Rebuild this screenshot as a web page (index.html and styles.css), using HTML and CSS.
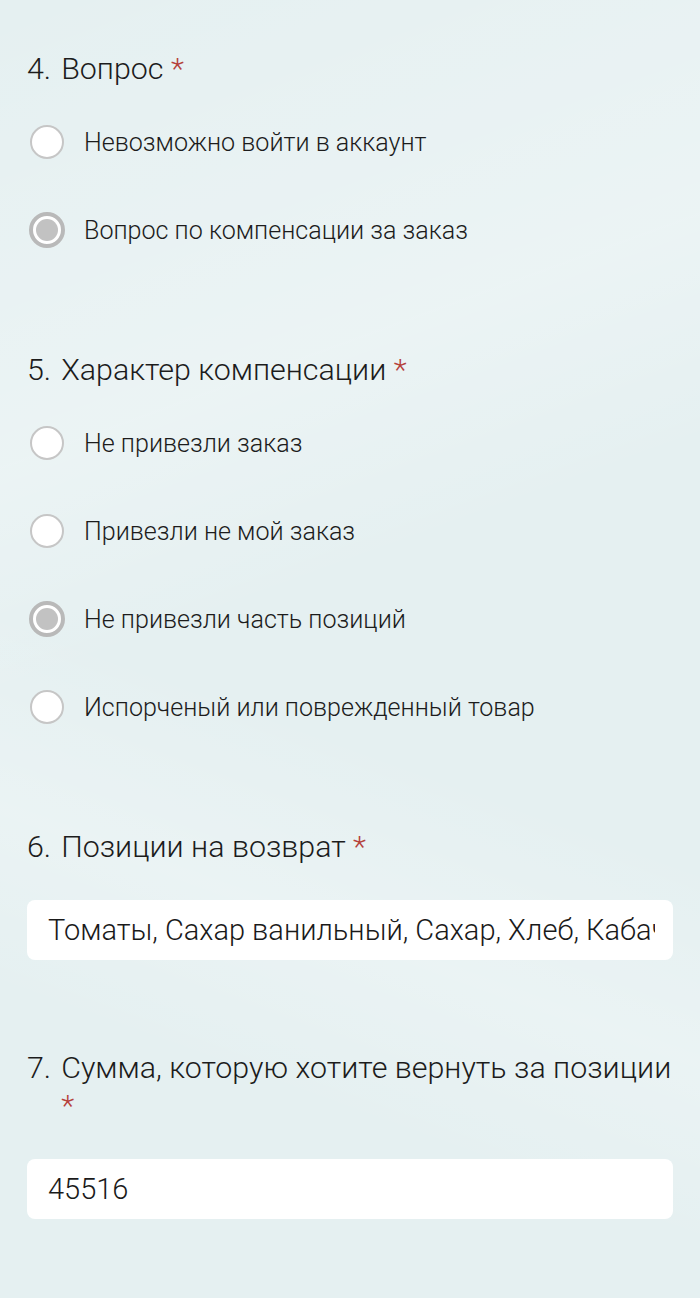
FILE: index.html
```html
<!DOCTYPE html>
<html lang="ru">
<head>
<meta charset="utf-8">
<title>Форма</title>
<link rel="stylesheet" href="styles.css">
</head>
<body>
<main class="form">
  <section class="q q-radio">
    <h2 class="q-title"><span class="q-num">4.</span><span class="q-text">Вопрос <span class="req">*</span></span></h2>
    <div class="opts">
      <div class="opt"><span class="radio-slot"><span class="radio"></span></span><span class="opt-label">Невозможно войти в аккаунт</span></div>
      <div class="opt"><span class="radio-slot"><span class="radio radio-on"></span></span><span class="opt-label">Вопрос по компенсации за заказ</span></div>
    </div>
  </section>

  <section class="q q-radio">
    <h2 class="q-title"><span class="q-num">5.</span><span class="q-text">Характер компенсации <span class="req">*</span></span></h2>
    <div class="opts">
      <div class="opt"><span class="radio-slot"><span class="radio"></span></span><span class="opt-label">Не привезли заказ</span></div>
      <div class="opt"><span class="radio-slot"><span class="radio"></span></span><span class="opt-label">Привезли не мой заказ</span></div>
      <div class="opt"><span class="radio-slot"><span class="radio radio-on"></span></span><span class="opt-label">Не привезли часть позиций</span></div>
      <div class="opt"><span class="radio-slot"><span class="radio"></span></span><span class="opt-label">Испорченый или поврежденный товар</span></div>
    </div>
  </section>

  <section class="q q-text-field">
    <h2 class="q-title"><span class="q-num">6.</span><span class="q-text">Позиции на возврат <span class="req">*</span></span></h2>
    <div class="field"><div class="field-val">Томаты, Сахар ванильный, Сахар, Хлеб, Кабачки, Огурцы</div></div>
  </section>

  <section class="q q-text-field">
    <h2 class="q-title"><span class="q-num">7.</span><span class="q-text">Сумма, которую хотите вернуть за позиции <span class="req">*</span></span></h2>
    <div class="field"><div class="field-val">45516</div></div>
  </section>
</main>
</body>
</html>
```

FILE: styles.css
```css
html, body {
  margin: 0;
  padding: 0;
}

body {
  width: 700px;
  min-height: 1298px;
  font-family: Roboto, "Noto Sans", "Liberation Sans", sans-serif;
  color: #212121;
  background-color: #e5f0f1;
  background-image:
    linear-gradient(160deg, rgba(255,255,255,0) 0%, rgba(255,255,255,0.25) 30%, rgba(255,255,255,0) 45%),
    linear-gradient(200deg, rgba(255,255,255,0) 55%, rgba(255,255,255,0.22) 68%, rgba(255,255,255,0) 80%);
}

.form {
  padding: 50px 27px 0 27px;
}

.q-radio {
  padding-bottom: 77px;
}

.q-text-field {
  padding-bottom: 89px;
}

.q-title {
  display: flex;
  gap: 10px;
  margin: 0;
  font-size: 30.4px;
  font-weight: 300;
  line-height: 38px;
  color: #1c1c1c;
}

.q-num {
  flex: none;
}

.q-text {
  flex: 1;
}

.req {
  color: #b5413b;
}

.opts {
  margin-top: 10px;
}

.opt {
  display: flex;
  align-items: center;
  height: 88px;
}

.radio-slot {
  flex: none;
  width: 40px;
  display: flex;
  justify-content: center;
  align-items: center;
}

.radio {
  box-sizing: border-box;
  width: 34px;
  height: 34px;
  border-radius: 50%;
  background: #ffffff;
  border: 2px solid #c6c6c6;
}

.radio-on {
  width: 36px;
  height: 36px;
  border: 4px solid #b9b9b9;
  display: flex;
  justify-content: center;
  align-items: center;
}

.radio-on::after {
  content: "";
  width: 22px;
  height: 22px;
  border-radius: 50%;
  background: #c2c2c2;
}

.opt-label {
  margin-left: 17px;
  font-size: 25.1px;
  font-weight: 300;
  color: #1c1c1c;
}

.field {
  margin-top: 34px;
  height: 60px;
  box-sizing: border-box;
  padding: 0 18px 0 21px;
  background: #ffffff;
  border-radius: 8px;
  display: flex;
  align-items: center;
}

.field-val {
  overflow: hidden;
  white-space: nowrap;
  font-size: 29px;
  font-weight: 300;
  color: #1a1a1a;
}
```
